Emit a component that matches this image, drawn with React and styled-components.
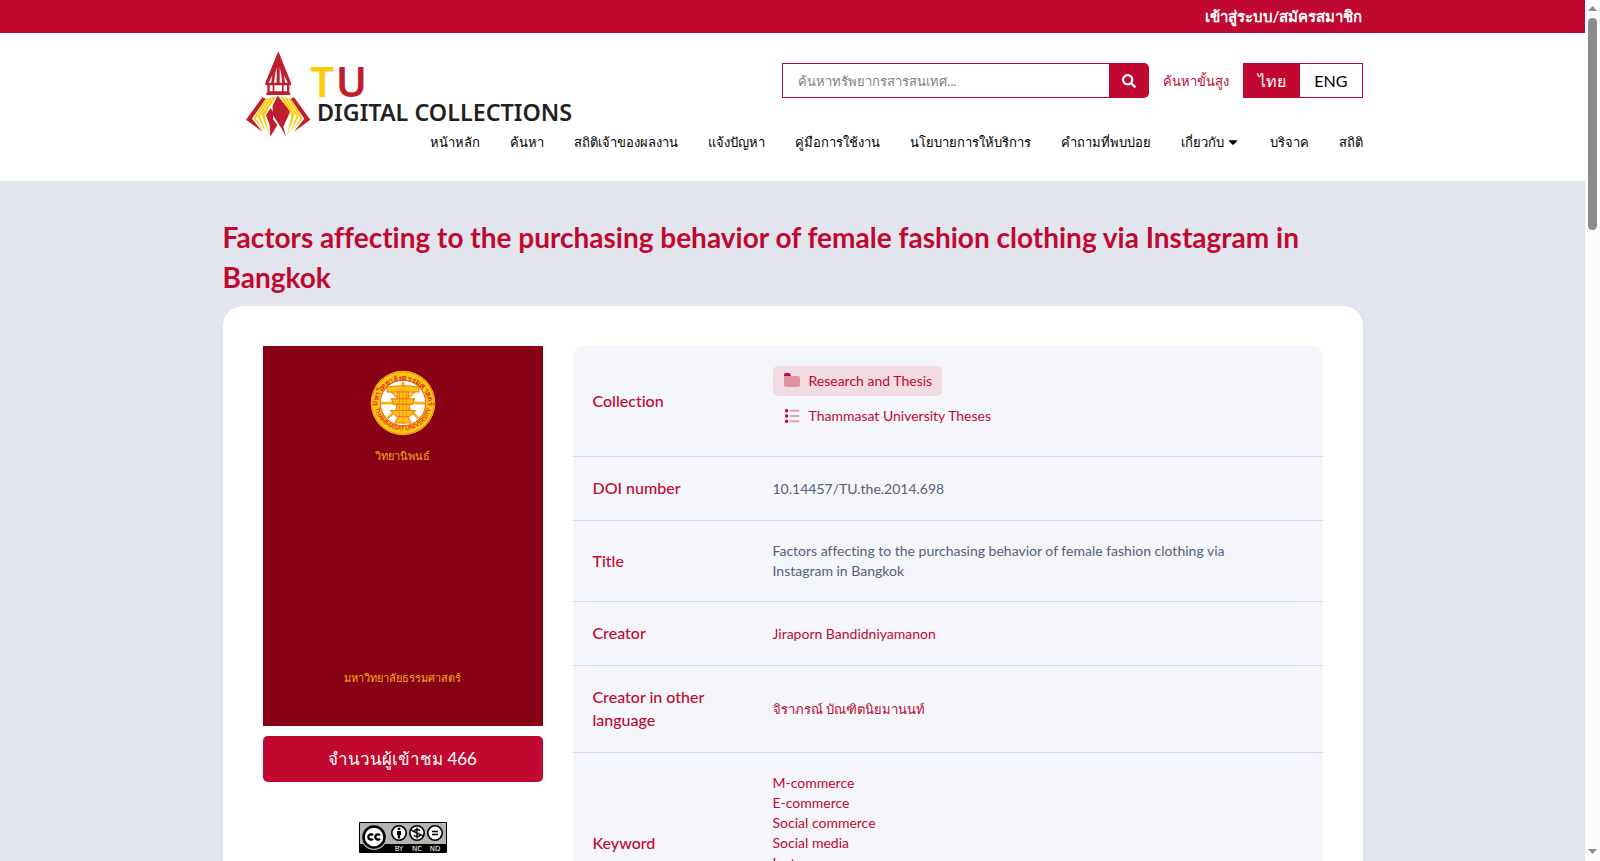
import * as React from 'react'
import styled, { createGlobalStyle } from 'styled-components'
import { FaCaretDown, FaSearch } from 'react-icons/fa'

const GlobalStyle = createGlobalStyle`
  * {
    box-sizing: border-box;
  }

  body {
    margin: 0;
    color: #000;
    font-family: Lato, "Noto Sans", sans-serif;
    font-size: 14px;
    font-variant-ligatures: none;
    line-height: 20px;
  }

  a {
    color: inherit;
    text-decoration: none;
  }
`

const Shell = styled.div`
  display: flex;
  height: 100vh;
  overflow: hidden;
`

const Page = styled.div`
  background: #e2e5ee;
  flex: 1;
  min-width: 0;
  overflow: hidden;
`

const ScrollTrack = styled.div`
  align-items: center;
  background: #fcfcfc;
  display: flex;
  flex-direction: column;
  padding: 6px 0 7px;
  width: 15px;
`

const ScrollArrow = styled.svg`
  display: block;
  fill: #8b8b8b;
  height: 5px;
  width: 9px;
`

const ScrollThumb = styled.div`
  background: #8b8b8b;
  border-radius: 5px;
  height: 212px;
  margin: 7px 0 auto;
  width: 9px;
`

const Container = styled.div`
  margin: 0 auto;
  max-width: 1140px;
`

const TopBar = styled.div`
  background: #c10830;
  color: #fff;
  font-size: 15px;
  font-weight: 700;
  line-height: 33px;
  text-align: right;
`

const Header = styled.header`
  background: #fff;
`

const HeaderGrid = styled(Container)`
  display: grid;
  grid-template-columns: auto 1fr;
  padding: 17px 0 29px;
`

const LogoLink = styled.a`
  grid-area: 1 / 1 / 3 / 2;
  margin-left: 23px;
`

const LogoSvg = styled.svg`
  display: block;
  height: 87px;
  width: 328px;
`

const Tools = styled.div`
  align-items: center;
  display: flex;
  gap: 14px;
  grid-area: 1 / 2 / 2 / 3;
  justify-self: end;
  padding-top: 13px;
`

const SearchForm = styled.form`
  display: flex;
  height: 35px;
`

const SearchInput = styled.input`
  border: 1px solid #c10830;
  border-right: 0;
  color: #333;
  font: inherit;
  font-size: 13px;
  outline: 0;
  padding: 0 15px;
  width: 327px;

  &::placeholder {
    color: #808080;
    opacity: 1;
  }
`

const SearchButton = styled.button`
  align-items: center;
  background: #c10830;
  border: 0;
  border-radius: 0 5px 5px 0;
  color: #fff;
  display: flex;
  font-size: 14px;
  justify-content: center;
  padding: 0;
  width: 40px;
`

const AdvancedLink = styled.a`
  color: #c10830;
  font-size: 13px;
`

const Languages = styled.div`
  border: 1px solid #c10830;
  display: flex;
  height: 35px;
`

const Language = styled.button`
  background: ${({ $active }) => ($active ? '#c10830' : '#fff')};
  border: 0;
  color: ${({ $active }) => ($active ? '#fff' : '#000')};
  font: inherit;
  font-size: 16px;
  padding: 0 14px;
`

const Nav = styled.nav`
  display: flex;
  font-size: 13px;
  font-weight: 500;
  gap: 30px;
  grid-area: 2 / 1 / 3 / 3;
  justify-self: end;
  padding-top: 34px;
`

const NavLink = styled.a`
  align-items: center;
  display: flex;
  gap: 2px;
  white-space: nowrap;
`

const Title = styled.h1`
  color: #c10830;
  font-size: 28px;
  font-weight: 700;
  line-height: 40px;
  margin: 0;
  padding: 36px 0 9px;
`

const Card = styled.main`
  align-items: flex-start;
  background: #fff;
  border-radius: 20px;
  display: flex;
  gap: 30px;
  padding: 40px;
`

const Side = styled.aside`
  align-items: center;
  display: flex;
  flex-direction: column;
  width: 280px;
`

const Cover = styled.div`
  align-items: center;
  background: #870015;
  color: #f5a81c;
  display: flex;
  flex-direction: column;
  font-size: 11px;
  height: 380px;
  justify-content: space-between;
  padding: 24px 0 38px;
  width: 100%;
`

const CoverHead = styled.div`
  align-items: center;
  display: flex;
  flex-direction: column;
  gap: 10px;
`

const EmblemSvg = styled.svg`
  display: block;
  height: 66px;
  width: 66px;
`

const Views = styled.button`
  background: #c10830;
  border: 0;
  border-radius: 5px;
  color: #fff;
  font: inherit;
  font-size: 17px;
  height: 46px;
  margin: 10px 0 40px;
  width: 100%;
`

const BadgeSvg = styled.svg`
  display: block;
  height: 31px;
  width: 88px;
`

const TableBox = styled.div`
  background: #f4f6fb;
  border-radius: 10px;
  flex: 1;
  overflow: hidden;
`

const Table = styled.table`
  border-collapse: collapse;
  text-align: left;
  width: 100%;
`

const TableRow = styled.tr`
  border-bottom: 1px solid #d2d9ee;
`

const TableHeader = styled.th`
  color: #c10830;
  font-size: 16px;
  font-weight: 500;
  line-height: 23px;
  padding: 19px 20px 21px;
  width: 200px;
`

const TableData = styled.td`
  color: ${({ $plain }) => ($plain ? '#53627a' : '#c10830')};
  padding: 20px 80px 20px 0;
`

const ThaiName = styled.a`
  font-size: 13px;
`

const Collections = styled.div`
  align-items: flex-start;
  display: flex;
  flex-direction: column;
  gap: 5px;
  padding-bottom: 5px;
`

const CollectionLink = styled.a`
  align-items: center;
  background: ${({ $active }) => ($active ? '#f2dce3' : 'transparent')};
  border-radius: 5px;
  display: flex;
  gap: 9px;
  height: 30px;
  padding: 0 10px 0 11px;
`

const Keywords = styled.div`
  display: flex;
  flex-direction: column;
  padding-bottom: 40px;
`

const ItemIcon = styled.svg`
  display: block;
  fill: #c10830;
  height: 16px;
  width: 16px;
`

const navItems = [
  'หน้าหลัก',
  'ค้นหา',
  'สถิติเจ้าของผลงาน',
  'แจ้งปัญหา',
  'คู่มือการใช้งาน',
  'นโยบายการให้บริการ',
  'คำถามที่พบบ่อย',
  'เกี่ยวกับ',
  'บริจาค',
  'สถิติ',
]

const keywords = ['M-commerce', 'E-commerce', 'Social commerce', 'Social media', 'Instagram']

const Logo = () => (
  <LogoSvg viewBox="78 60 984 261" role="img" aria-label="TU Digital Collections">
    <g fill="#be1e2d">
      <path d="M175 64 L213 158 V166 H208 V188 H211 V195 H139 V188 H142 V166 H136 V158 Z" />
      <path d="M173 197 L211 244 L190 290 L198 320 L185 296 L158 254 V226 Z" />
      <path d="M152 234 L159 246 V268 L172 285 L151 320 L149 284 L138 256 Z" />
      <path d="M127 202 L137 206 L96 266 L127 305 L78 269 Z" />
      <path d="M222 202 L212 206 L253 266 L222 305 L271 269 Z" />
    </g>
    <g fill="#fff">
      <path d="M166 128 L170 112 V158 H162 Z" />
      <path d="M183 128 L179 112 V158 H187 Z" />
      <path d="M157 136 L154 158 H146 Z" />
      <path d="M192 136 L195 158 H203 Z" />
      <path d="M149 166 H158 V184 H149 Z M163 166 H186 V184 H163 Z M191 166 H201 V184 H191 Z" />
    </g>
    <g fill="#ffcb08">
      <path d="M138 205 H145 L108 265 L130 303 L101 265 Z" />
      <path d="M148 203 H156 L120 259 L139 310 L113 260 Z" />
      <path d="M159 201 H167 L134 254 L147 316 L125 254 Z" />
      <path d="M211 205 H204 L241 265 L219 303 L248 265 Z" />
      <path d="M201 203 H193 L229 259 L210 310 L236 260 Z" />
      <path d="M190 201 H182 L215 254 L202 316 L224 254 Z" />
    </g>
    <g fontFamily="Noto Sans, sans-serif">
      <text x="271" y="201" fontSize="126" fontWeight="600" fill="#ffcb08">T</text>
      <text x="347" y="201" fontSize="126" fontWeight="600" fill="#be1e2d">U</text>
      <text x="291" y="273" fontSize="70" fontWeight="600" fill="#231f20">DIGITAL COLLECTIONS</text>
    </g>
  </LogoSvg>
)

const Emblem = () => (
  <EmblemSvg viewBox="0 0 192 192" role="img" aria-label="Thammasat University">
    <circle cx="96" cy="96" r="94" fill="#ffc814" />
    <circle cx="96" cy="96" r="91" fill="none" stroke="#e8651a" strokeWidth="2" />
    <circle cx="96" cy="96" r="66" fill="#fff" stroke="#e8651a" strokeWidth="3" />
    <g stroke="#fbb01a" strokeWidth="8">
      <path d="M96 34 V158 M32 96 H160 M52 52 L140 140 M140 52 L52 140" />
    </g>
    <g fill="#ffc20e" stroke="#ee7a1a" strokeWidth="3">
      <path d="M50 50 Q96 42 142 50 V64 H50 Z" />
      <path d="M78 64 H114 L110 84 H82 Z" />
      <path d="M62 84 H130 L122 100 H70 Z" />
      <path d="M76 100 H116 L112 118 H80 Z" />
      <path d="M60 118 H132 L114 136 H78 Z" />
      <path d="M82 136 H110 L120 154 H72 Z" />
    </g>
    <path d="M96 48 V150 M86 64 V136 M106 64 V136" stroke="#ee7a1a" strokeWidth="2" />
    <path id="emblemTop" d="M22 104 A74 74 0 1 1 170 104" fill="none" />
    <path id="emblemBottom" d="M12 104 A85 85 0 0 0 180 104" fill="none" />
    <g fill="#d83a12" fontWeight="700" textAnchor="middle">
      <text fontSize="22">
        <textPath href="#emblemTop" startOffset="50%">มหาวิทยาลัยธรรมศาสตร์</textPath>
      </text>
      <text fontSize="18">
        <textPath href="#emblemBottom" startOffset="50%">THAMMASAT UNIVERSITY</textPath>
      </text>
    </g>
  </EmblemSvg>
)

const LicenseBadge = () => (
  <BadgeSvg viewBox="0 0 88 31" role="img" aria-label="Creative Commons BY NC ND">
    <rect width="88" height="31" rx="1" fill="#000" />
    <rect x="1" y="1" width="86" height="21" fill="#b2b7b0" />
    <circle cx="15" cy="15" r="13" fill="#b2b7b0" />
    <circle cx="15" cy="15" r="10.5" fill="#fff" stroke="#000" strokeWidth="2.5" />
    <g fill="none" stroke="#000" strokeWidth="2.3">
      <path d="M14 13.2 A2.7 2.7 0 1 0 14 16.8" />
      <path d="M21 13.2 A2.7 2.7 0 1 0 21 16.8" />
    </g>
    <g fill="#fff" stroke="#000" strokeWidth="1.6">
      <circle cx="40" cy="11" r="7.2" />
      <circle cx="58" cy="11" r="7.2" />
      <circle cx="76" cy="11" r="7.2" />
    </g>
    <circle cx="40" cy="6.8" r="1.4" />
    <path d="M38 9 H42 V13 H41.2 V16.5 H38.8 V13 H38 Z" />
    <path d="M60.8 8.8 C60 7 55.6 7 55.6 9.2 C55.6 11.4 60.8 10.6 60.8 13 C60.8 15.2 56 15.2 55 13 M58 5.6 V16.4 M52 8.2 L64 13.8" fill="none" stroke="#000" strokeWidth="1.4" />
    <path d="M73 9.5 H79 M73 12.5 H79" stroke="#000" strokeWidth="1.4" />
    <g fill="#fff" fontFamily="DejaVu Sans, sans-serif" fontSize="7" textAnchor="middle">
      <text x="40" y="29">BY</text>
      <text x="58" y="29">NC</text>
      <text x="76" y="29">ND</text>
    </g>
  </BadgeSvg>
)

const FolderIcon = () => (
  <ItemIcon viewBox="0 0 16 16" aria-hidden="true">
    <path d="M0 3 V2 Q0 0 2 0 H5 Q6 0 7 3 Z" />
    <path d="M0 3 H14 Q16 3 16 5 V12 Q16 14 14 14 H2 Q0 14 0 12 Z" opacity="0.35" />
  </ItemIcon>
)

const ListIcon = () => (
  <ItemIcon viewBox="0 0 16 16" aria-hidden="true">
    <circle cx="2.6" cy="2.7" r="1.7" />
    <circle cx="2.6" cy="8" r="1.7" />
    <circle cx="2.6" cy="13.3" r="1.7" />
    <path d="M6.5 2.7 H14.5 M6.5 8 H14.5 M6.5 13.3 H14.5" stroke="#c10830" strokeWidth="2" strokeLinecap="round" opacity="0.35" />
  </ItemIcon>
)

const Field = ({ label, plain, children }) => (
  <TableRow>
    <TableHeader scope="row">{label}</TableHeader>
    <TableData $plain={plain}>{children}</TableData>
  </TableRow>
)

const SiteHeader = () => (
  <Header>
    <HeaderGrid>
      <LogoLink href="#"><Logo /></LogoLink>
      <Tools>
        <SearchForm>
          <SearchInput aria-label="ค้นหา" placeholder="ค้นหาทรัพยากรสารสนเทศ..." />
          <SearchButton type="button" aria-label="ค้นหา"><FaSearch /></SearchButton>
        </SearchForm>
        <AdvancedLink href="#">ค้นหาขั้นสูง</AdvancedLink>
        <Languages>
          <Language type="button" $active>ไทย</Language>
          <Language type="button">ENG</Language>
        </Languages>
      </Tools>
      <Nav>
        { navItems.map((item) => (
          <NavLink key={item} href="#">
            {item}
            {item === 'เกี่ยวกับ' && <FaCaretDown size={14} />}
          </NavLink>
        ))}
      </Nav>
    </HeaderGrid>
  </Header>
)

const App = () => (
  <Shell>
    <GlobalStyle />
    <Page>
      <TopBar>
        <Container><a href="#">เข้าสู่ระบบ/สมัครสมาชิก</a></Container>
      </TopBar>
      <SiteHeader />
      <Container>
        <Title>Factors affecting to the purchasing behavior of female fashion clothing via Instagram in Bangkok</Title>
        <Card>
          <Side>
            <Cover>
              <CoverHead>
                <Emblem />
                <span>วิทยานิพนธ์</span>
              </CoverHead>
              <span>มหาวิทยาลัยธรรมศาสตร์</span>
            </Cover>
            <Views type="button">จำนวนผู้เข้าชม 466</Views>
            <LicenseBadge />
          </Side>
          <TableBox>
            <Table>
              <tbody>
                <Field label="Collection">
                  <Collections>
                    <CollectionLink href="#" $active><FolderIcon />Research and Thesis</CollectionLink>
                    <CollectionLink href="#"><ListIcon />Thammasat University Theses</CollectionLink>
                  </Collections>
                </Field>
                <Field label="DOI number" plain>10.14457/TU.the.2014.698</Field>
                <Field label="Title" plain>
                  Factors affecting to the purchasing behavior of female fashion clothing via Instagram in Bangkok
                </Field>
                <Field label="Creator"><a href="#">Jiraporn Bandidniyamanon</a></Field>
                <Field label="Creator in other language"><ThaiName href="#">จิราภรณ์ บัณฑิตนิยมานนท์</ThaiName></Field>
                <Field label="Keyword">
                  <Keywords>
                    { keywords.map((keyword) => <a key={keyword} href="#">{keyword}</a>)}
                  </Keywords>
                </Field>
              </tbody>
            </Table>
          </TableBox>
        </Card>
      </Container>
    </Page>
    <ScrollTrack aria-hidden="true">
      <ScrollArrow viewBox="0 0 9 5"><path d="M0 5 L4.5 0 L9 5 Z" /></ScrollArrow>
      <ScrollThumb />
      <ScrollArrow viewBox="0 0 9 5"><path d="M0 0 L4.5 5 L9 0 Z" /></ScrollArrow>
    </ScrollTrack>
  </Shell>
)

export default App
